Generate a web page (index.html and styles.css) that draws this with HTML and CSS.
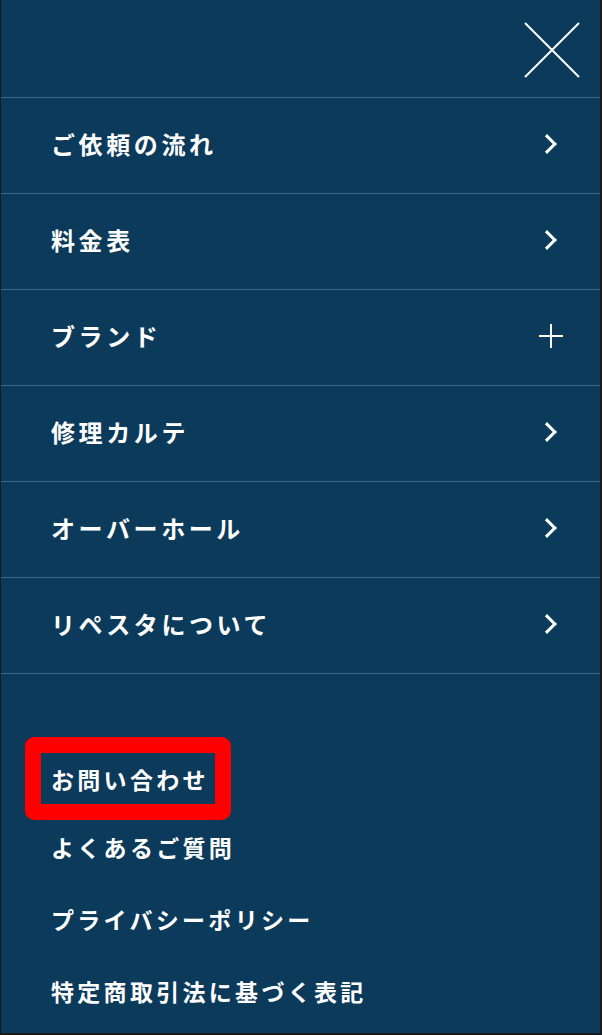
FILE: index.html
```html
<!DOCTYPE html>
<html lang="ja">
<head>
    <meta charset="UTF-8">
    <meta name="viewport" content="width=device-width, initial-scale=1.0">
    <title>メニュー</title>
    <link rel="stylesheet" href="styles.css">
</head>
<body>

<div class="menu">
  <div class="menu-head">
    <button class="close-btn" aria-label="閉じる">
      <svg width="56" height="56" viewBox="0 0 56 56">
        <path d="M1 1 L55 55 M55 1 L1 55" stroke="#fff" stroke-width="2" fill="none"/>
      </svg>
    </button>
  </div>

  <ul class="main-nav">
    <li><a href="#">ご依頼の流れ<span class="chev"></span></a></li>
    <li><a href="#">料金表<span class="chev"></span></a></li>
    <li><a href="#">ブランド<span class="plus"></span></a></li>
    <li><a href="#">修理カルテ<span class="chev"></span></a></li>
    <li><a href="#">オーバーホール<span class="chev"></span></a></li>
    <li><a href="#">リペスタについて<span class="chev"></span></a></li>
  </ul>

  <ul class="sub-nav">
    <li><a href="#"><span class="mark">お問い合わせ</span></a></li>
    <li><a href="#">よくあるご質問</a></li>
    <li><a href="#">プライバシーポリシー</a></li>
    <li><a href="#">特定商取引法に基づく表記</a></li>
  </ul>
</div>

</body>
</html>
```

FILE: styles.css
```css
* { box-sizing: border-box; }

body {
  margin: 0;
  background: #fff;
  font-family: "Noto Sans CJK JP", "Noto Sans", sans-serif;
}

.menu {
  width: 602px;
  height: 1035px;
  background: #0b3a5b;
  border-left: 1px solid #1a1a1a;
  border-right: 2px solid #1a1a1a;
  border-bottom: 2px solid #1a1a1a;
  overflow: hidden;
}

.menu-head {
  height: 97px;
  display: flex;
  justify-content: flex-end;
  padding: 22px 20px 0 0;
}

.close-btn {
  background: none;
  border: none;
  padding: 0;
  width: 56px;
  height: 56px;
  cursor: pointer;
}

.close-btn svg { display: block; }

ul {
  list-style: none;
  margin: 0;
  padding: 0;
}

.main-nav {
  border-bottom: 1px solid #3f6685;
}

.main-nav li {
  border-top: 1px solid #3f6685;
}

.main-nav a {
  height: 95px;
  display: flex;
  align-items: center;
  justify-content: space-between;
  padding: 0 38px 4px 50px;
  color: #fff;
  text-decoration: none;
  font-size: 24px;
  font-weight: 700;
  letter-spacing: 3.6px;
}

.chev {
  width: 14px;
  height: 14px;
  border-top: 3px solid #fff;
  border-right: 3px solid #fff;
  transform: rotate(45deg);
  margin-right: 8px;
}

.plus {
  position: relative;
  width: 24px;
  height: 24px;
  margin-right: -1px;
}

.plus::before,
.plus::after {
  content: "";
  position: absolute;
  background: #fff;
}

.plus::before { left: 0; right: 0; top: 11px; height: 2px; }
.plus::after { top: 0; bottom: 0; left: 11px; width: 2px; }

.sub-nav {
  padding-top: 65px;
}

.sub-nav a {
  display: block;
  height: 72px;
  line-height: 72px;
  padding-left: 50px;
  color: #fff;
  text-decoration: none;
  font-size: 23px;
  font-weight: 700;
  letter-spacing: 3.3px;
}

/* 赤枠の注釈 */
.mark {
  position: relative;
  display: inline-block;
  line-height: 36px;
  vertical-align: middle;
}

.mark::after {
  content: "";
  position: absolute;
  top: -24px;
  bottom: -23px;
  left: -26px;
  right: -22px;
  border: 16px solid #ff0000;
  border-radius: 9px;
}
```
